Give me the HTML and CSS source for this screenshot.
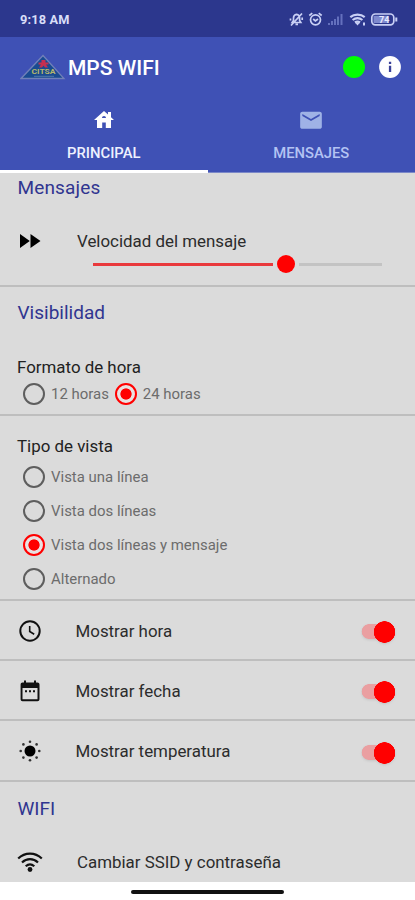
FILE: index.html
```html
<!DOCTYPE html>
<html lang="es">
<head>
<meta charset="utf-8">
<title>MPS WIFI</title>
<link rel="stylesheet" href="styles.css">
</head>
<body>
<div class="screen">
  <div class="status">
    <span class="time">9:18 AM</span>
    <svg class="status-icons" width="112" height="18" viewBox="0 0 112 18" fill="none" stroke="#c9d0f5" stroke-width="1.7">
      <path d="M4.200 12.500h8.600l-1.200-2V8c0-2-1-3.300-3-3.600-2 .3-3.100 1.600-3.100 3.600v2.500zM3 15.500 14 3.500M7.500 14.300h2.500M2.500 8.500v2M14.200 7.500v2.500"/>
      <circle cx="27.500" cy="9.800" r="5"/><path d="m25.200 9 2.200 2 2.600-2M21.300 5.500l3-2.300M33.700 5.500l-3-2.300"/>
      <g stroke="none" fill="#6470bd"><path d="M40 13h2v2h-2zM43 11h2v4h-2zM46 9h2v6h-2zM49 6.500h2V15h-2zM52.500 4h2v11h-2z"/></g>
      <path d="M62.300 7.200c4-3.400 10.400-3.400 14.400 0M64.600 10c3-2.300 6.800-2.300 9.800 0M67 12.500c1.500-1.100 3.500-1.100 5 0" stroke-width="2.200"/>
      <path d="m67 12.500 2.500 3 2.500-3z" fill="#c9d0f5" stroke="none"/><path d="M76 12.500v3" stroke-width="2"/>
      <rect x="83.800" y="4" width="22" height="10.800" rx="3.500"/><path d="M108.300 7.500v4" stroke-width="2"/>
      <path d="M85.500 5.800h15v7.200h-15z" fill="#7e89ce" stroke="none"/>
      <text class="battery" x="91" y="12.700">74</text>
    </svg>
  </div>
  <header class="appbar">
    <div class="toolbar">
      <svg class="logo" width="46" height="26" viewBox="0 0 46 26">
        <path d="M23 1.500 44 24.500H1z" fill="#194b91" stroke="#7180b8" stroke-width="1.300"/>
        <path d="M21.500 6h4v2.500h3v2h-2.500l2 3h-3l-1.500-2-1.500 2h-3l2-3h-2.500v-2h3z" fill="#c62f50"/>
        <text x="11.500" y="20.300" textLength="24" lengthAdjust="spacingAndGlyphs" class="logo-text">CITSA</text>
        <path d="M14 22.300h20" stroke="#5f86ae" stroke-width=".8"/>
      </svg>
      <h1>MPS WIFI</h1>
      <span class="online"></span>
      <svg class="info" width="22" height="22" viewBox="0 0 22 22"><circle cx="11" cy="11" r="10.900" fill="#fff"/><path d="M9.900 5.700h2.300v2.200H9.900zM9.900 9.700h2.300v6.400H9.900z" fill="#3a4199"/></svg>
    </div>
    <nav class="tabs">
      <div class="tab active">
        <svg width="24" height="24" viewBox="0 0 24 24" fill="#fff"><path d="M19 9.300V4h-3v2.600L12 3 2 12h3v8h5.200v-5.500h3.600V20H19v-8h3zM10 10c0-1.100.9-2 2-2s2 .9 2 2z"/></svg>
        <span>PRINCIPAL</span>
      </div>
      <div class="tab">
        <svg width="26" height="24" viewBox="0 0 24 24" preserveAspectRatio="none" fill="#9fb2e6"><path d="M20 3.800H4c-1.100 0-2 .8-2 1.900v13.200c0 1.100.9 1.900 2 1.900h16c1.100 0 2-.8 2-1.900V5.700c0-1.100-.9-1.900-2-1.900zm0 4.100-8 5-8-5v-2l8 5 8-5z"/></svg>
        <span>MENSAJES</span>
      </div>
    </nav>
  </header>
  <main>
    <section class="speed">
      <h2 class="t-men">Mensajes</h2>
      <div class="speed-row">
        <svg class="forward" width="22" height="14" viewBox="0 0 22 14"><path d="M0 0v14l9.800-7zM10.500 0v14L20.500 7z"/></svg>
        <div class="speed-body">
          <div class="label">Velocidad del mensaje</div>
          <div class="slider"><i class="filled"></i><i class="thumb"></i><i class="rest"></i></div>
        </div>
      </div>
    </section>
    <section class="format">
      <h2>Visibilidad</h2>
      <h3>Formato de hora</h3>
      <div class="inline">
        <div class="option"><i class="radio"></i><span>12 horas</span></div>
        <div class="option"><i class="radio on"></i><span>24 horas</span></div>
      </div>
    </section>
    <section class="view">
      <h3>Tipo de vista</h3>
      <div class="options">
        <div class="option"><i class="radio"></i><span>Vista una línea</span></div>
        <div class="option"><i class="radio"></i><span>Vista dos líneas</span></div>
        <div class="option"><i class="radio on"></i><span>Vista dos líneas y mensaje</span></div>
        <div class="option"><i class="radio"></i><span>Alternado</span></div>
      </div>
    </section>
    <section class="toggle">
      <svg width="24" height="24" viewBox="0 0 24 24"><circle cx="12" cy="12" r="9.700" fill="none" stroke="#111" stroke-width="2"/><path d="M11.700 7v5.500l4.500 2.700" fill="none" stroke="#111" stroke-width="1.600"/></svg>
      <span class="label">Mostrar hora</span><i class="switch"></i>
    </section>
    <section class="toggle">
      <svg width="24" height="24" viewBox="0 0 24 24"><path d="M19.500 3.500H18v-2h-2v2H8v-2H6v2H4.500c-1.100 0-1.900.9-1.900 2v14.700c0 1.100.8 2 1.900 2h15c1.100 0 2-.9 2-2V5.500c0-1.100-.9-2-2-2zm0 16.700h-15V9h15zM7 11.300h2v2H7zm4 0h2v2h-2zm4 0h2v2h-2z" fill="#111"/></svg>
      <span class="label">Mostrar fecha</span><i class="switch"></i>
    </section>
    <section class="toggle last">
      <svg width="24" height="24" viewBox="0 0 24 24"><circle cx="12" cy="12" r="5.500"/><g fill="#333"><circle cx="12" cy="2.800" r="1.300"/><circle cx="12" cy="21.200" r="1.300"/><circle cx="2.700" cy="12" r="1.300"/><circle cx="21.300" cy="12" r="1.300"/><circle cx="5.400" cy="5.400" r="1.300"/><circle cx="18.600" cy="5.400" r="1.300"/><circle cx="5.400" cy="18.600" r="1.300"/><circle cx="18.600" cy="18.600" r="1.300"/></g></svg>
      <span class="label">Mostrar temperatura</span><i class="switch"></i>
    </section>
    <section class="wifi">
      <h2>WIFI</h2>
      <div class="wifi-row">
        <svg width="26" height="22" viewBox="0 0 26 22" fill="none" stroke="#111" stroke-width="2.200"><path d="M1.200 7.500c6.700-6.500 16.900-6.500 23.600 0M5 11.500c4.600-4.400 11.400-4.400 16 0M8.700 15.300c2.600-2.300 6-2.300 8.600 0"/><circle cx="13" cy="18.500" r="2.400" fill="#111" stroke="none"/></svg>
        <span class="label">Cambiar SSID y contraseña</span>
      </div>
    </section>
  </main>
  <footer><i class="handle"></i></footer>
</div>
</body>
</html>
```

FILE: styles.css
```css
* { box-sizing: border-box; }
body { margin: 0; font-family: Roboto, "Liberation Sans", sans-serif; }
h1, h2, h3 { margin: 0; font-weight: 400; white-space: nowrap; }
i { display: block; flex: none; }
svg { display: block; flex: none; }
.screen { width: 415px; height: 900px; display: flex; flex-direction: column; overflow: hidden; background: #fff; }

.status { height: 37px; background: #2c378d; display: flex; justify-content: space-between; align-items: center; padding: 1px 15px 0 20px; }
.time { font-size: 12.800px; font-weight: 700; color: #d9def8; letter-spacing: .15px; }
.status-icons { margin-top: -1px; }
.battery { font-size: 9px; font-weight: 700; fill: #e8ebff; stroke: none; }

.appbar { height: 136px; background: #3f51b5; color: #fff; display: flex; flex-direction: column; border-bottom: 1px solid #7b88c8; }
.toolbar { height: 62px; display: flex; align-items: center; padding: 0 14px 0 20px; }
.toolbar .logo { margin-top: -2px; }
.logo-text { font-size: 8px; font-weight: 700; fill: #b5b66b; }
h1 { font-size: 21px; font-weight: 500; margin-left: 2px; flex: 1; }
.online { width: 22px; height: 22px; border-radius: 50%; background: #0f0; margin-right: 14px; margin-top: -2px; }
.info { margin-top: -2px; }
.tabs { flex: 1; display: flex; margin-bottom: -1px; }
.tab { width: 50%; display: flex; flex-direction: column; align-items: center; padding-top: 9px; font-size: 14.800px; font-weight: 500; line-height: 16px; color: #b3c3f3; }
.tab span { margin-top: 13px; }
.tab.active { color: #eef1ff; border-bottom: 3px solid #fff; }

main { height: 709px; background: #dbdbdb; color: #2c2c2c; }
section { border-bottom: 2px solid #bebebe; }
h2 { font-size: 19px; line-height: 22px; color: #303590; padding-left: 17.500px; }
.t-men { letter-spacing: .15px; }
h3 { font-size: 16.900px; line-height: 20px; padding-left: 17px; color: #222; }
.label { font-size: 16.900px; line-height: 20px; white-space: nowrap; }

.speed { height: 114px; padding-top: 4px; }
.speed-row { display: flex; padding: 32px 0 0 20px; }
.forward { margin-top: 3px; }
.speed-body { margin-left: 35px; }
.slider { display: flex; align-items: center; padding-left: 16px; height: 18px; margin-top: 4px; }
.filled { width: 180px; height: 3px; background: #e9393c; }
.thumb { width: 18px; height: 18px; border-radius: 50%; background: red; margin: 0 4px 0 3.500px; }
.rest { width: 83px; height: 3px; background: #c3c3c3; }

.format { height: 129px; padding-top: 15px; }
.format h3 { margin-top: 33px; }
.inline { display: flex; gap: 6px; padding: 6px 0 0 23px; }
.option { display: flex; align-items: center; gap: 6px; height: 22px; font-size: 14.950px; color: #6c6c6c; white-space: nowrap; }
.radio { width: 22px; height: 22px; border: 2px solid #5e5e5e; border-radius: 50%; }
.radio.on { border-color: red; background: radial-gradient(circle, red 5.200px, #e9e1e1 6px); }

.view { height: 185px; padding-top: 20px; }
.options { display: flex; flex-direction: column; gap: 12px; padding: 10px 0 0 23px; }

.toggle { height: 60px; display: flex; align-items: center; padding: 1px 19px 0 18px; }
.toggle.last { height: 61px; }
.toggle .label { margin-left: 33.500px; flex: 1; }
.switch { width: 35px; height: 22px; margin-top: 3px; background: radial-gradient(circle at 23.500px 11px, red 10.500px, transparent 11px), linear-gradient(#ea9fa1, #ea9fa1) 7px 3px / 17px 15px no-repeat, radial-gradient(circle at 8px 10.500px, #ea9fa1 7px, transparent 7.600px); filter: drop-shadow(0 1px 1px #8884); }

.wifi { border: 0; padding-top: 16px; }
.wifi-row { display: flex; align-items: center; padding: 31px 0 0 17px; }
.wifi-row .label { margin-left: 34px; }
footer { height: 18px; display: flex; justify-content: center; padding-top: 8px; }
.handle { width: 153px; height: 4px; border-radius: 2px; background: #111; }
```
